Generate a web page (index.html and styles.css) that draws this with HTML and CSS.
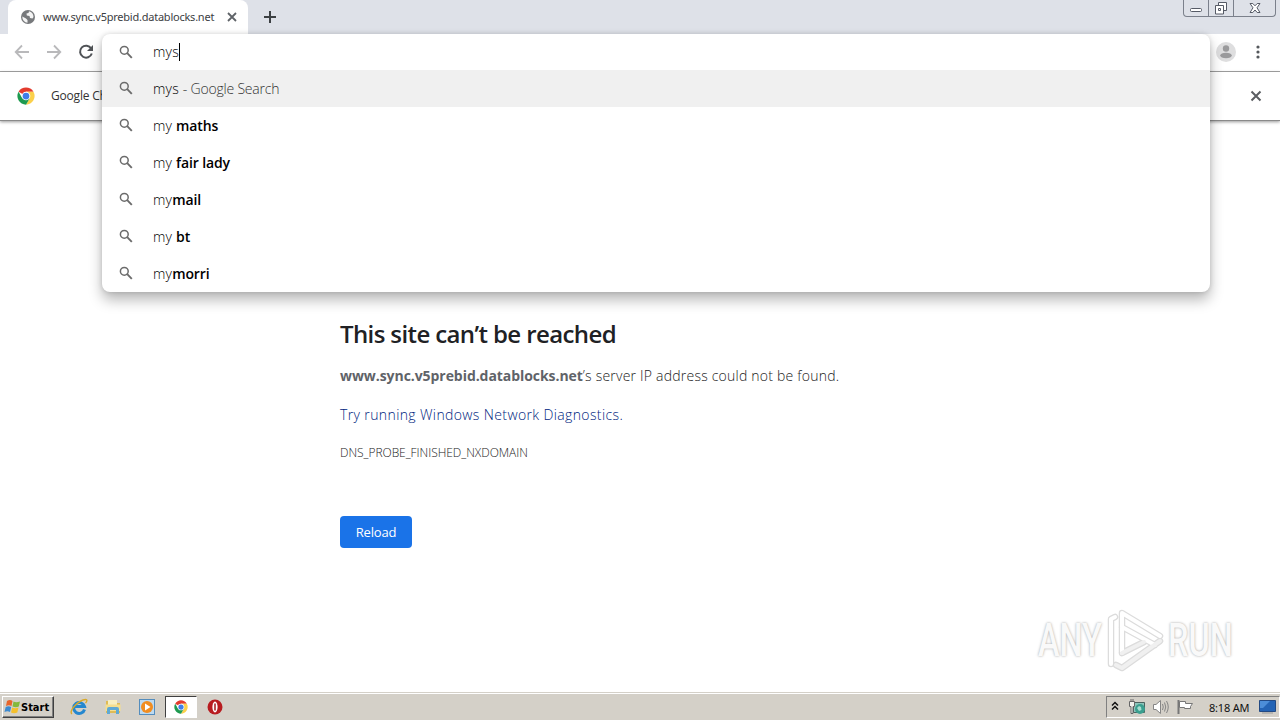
FILE: index.html
```html
<!DOCTYPE html>
<html lang="en">
<head>
    <meta charset="UTF-8">
    <meta name="viewport" content="width=device-width, initial-scale=1.0">
    <title>www.sync.v5prebid.datablocks.net</title>
    <link rel="stylesheet" href="styles.css">
</head>
<body>
    <svg class="defs" width="0" height="0">
        <symbol id="search" viewBox="0 0 14 14">
            <circle cx="5.3" cy="5.3" r="3.9" fill="none" stroke="#6b6b6b" stroke-width="1.5"/>
            <path d="M8.2 8.2L12.8 12.8" stroke="#6b6b6b" stroke-width="1.9"/>
        </symbol>
        <symbol id="chrome" viewBox="0 0 48 48">
            <path d="M24 24L4.100 12.500A23 23 0 0 1 43.900 12.500H24z" fill="#e33b2e"/>
            <path d="M24 12.500H43.900A23 23 0 0 1 24 47L34 29.700z" fill="#fbd04b"/>
            <path d="M4.100 12.500L14 29.700L34 29.700L24 47A23 23 0 0 1 4.100 12.500z" fill="#1e9a50"/>
            <circle cx="24" cy="24" r="11.500" fill="#fff"/>
            <circle cx="24" cy="24" r="9" fill="#3f7ee8"/>
        </symbol>
    </svg>

    <div class="window">
        <div class="tabstrip">
            <div class="tab">
                <svg class="globe" width="14" height="14" viewBox="0 0 14 14">
                    <circle cx="7" cy="7" r="7" fill="#77797c"/>
                    <path d="M1.300 6.500L5 8.500L6.500 10V12.800A6 6 0 0 1 1.300 6.500zM8 1.300L7.500 3L5.500 3.600L5.800 5.500L8.500 6L9 8L11.500 8.500L12.500 7A6 6 0 0 0 8 1.300z" fill="#f4f4f4"/>
                </svg>
                <span class="tab-title">www.sync.v5prebid.datablocks.net</span>
                <svg class="tab-close" width="10" height="10" viewBox="0 0 10 10">
                    <path d="M1 1L9 9M9 1L1 9" stroke="#5f6368" stroke-width="1.800"/>
                </svg>
            </div>
            <svg class="new-tab" width="12" height="12" viewBox="0 0 12 12">
                <path d="M6 0V12M0 6H12" stroke="#3c4043" stroke-width="2"/>
            </svg>
            <div class="window-buttons">
                <span><svg width="14" height="16" viewBox="0 0 14 16"><rect x="1.500" y="8.500" width="11" height="3" rx="1" fill="#fff" stroke="#565b66"/></svg></span>
                <span><svg width="14" height="16" viewBox="0 0 14 16"><path d="M4.500 2.500H12.500V10.500H4.500z" fill="#fff" stroke="#565b66"/><path d="M1.500 5.500H9.500V14H1.500z" fill="#fff" stroke="#565b66"/><path d="M4.500 8.500H6.500V10.500H4.500z" fill="none" stroke="#565b66"/></svg></span>
                <span class="close"><svg width="14" height="16" viewBox="0 0 14 16"><path d="M2 3.500H4.800L7 5.800L9.200 3.500H12L9 7.800L12 12.500H9.200L7 10L4.800 12.500H2L5 7.800z" fill="#fff" stroke="#565b66"/></svg></span>
            </div>
        </div>

        <div class="toolbar">
            <svg width="16" height="16" viewBox="0 0 16 16"><path d="M15 8H2M8 1.500L1.700 8L8 14.500" fill="none" stroke="#b9b9bb" stroke-width="1.800"/></svg>
            <svg width="16" height="16" viewBox="0 0 16 16"><path d="M1 8H14M8 1.500L14.300 8L8 14.500" fill="none" stroke="#b9b9bb" stroke-width="1.800"/></svg>
            <svg width="16" height="16" viewBox="0 0 16 16"><path d="M13.200 4.500A6 6 0 1 0 13.800 9.500" fill="none" stroke="#4f5256" stroke-width="2"/><path d="M15 1V7H9z" fill="#4f5256"/></svg>
            <div class="toolbar-right">
                <svg width="20" height="20" viewBox="0 0 20 20"><circle cx="10" cy="10" r="10" fill="#dededf"/><circle cx="10" cy="6.500" r="3.200" fill="#9a9a9c"/><ellipse cx="10" cy="13.500" rx="5.800" ry="2.800" fill="#9a9a9c"/></svg>
                <svg width="4" height="14" viewBox="0 0 4 14"><circle cx="2" cy="2" r="1.600" fill="#55585c"/><circle cx="2" cy="7" r="1.600" fill="#55585c"/><circle cx="2" cy="12" r="1.600" fill="#55585c"/></svg>
            </div>
        </div>

        <div class="infobar">
            <svg width="18" height="18"><use href="#chrome"/></svg>
            <span class="infobar-text">Google Chrome</span>
            <svg class="infobar-close" width="12" height="12" viewBox="0 0 12 12"><path d="M1.500 1.500L10.500 10.500M10.500 1.500L1.500 10.500" stroke="#5b5e62" stroke-width="2"/></svg>
        </div>

        <div class="omnibox">
            <div class="row input">
                <svg width="14" height="14"><use href="#search"/></svg>
                <span>mys</span><i class="caret"></i>
            </div>
            <div class="row selected">
                <svg width="14" height="14"><use href="#search"/></svg>
                <span>mys <em>- Google Search</em></span>
            </div>
            <div class="row"><svg width="14" height="14"><use href="#search"/></svg><span>my <b>maths</b></span></div>
            <div class="row"><svg width="14" height="14"><use href="#search"/></svg><span>my <b>fair lady</b></span></div>
            <div class="row"><svg width="14" height="14"><use href="#search"/></svg><span>my<b>mail</b></span></div>
            <div class="row"><svg width="14" height="14"><use href="#search"/></svg><span>my <b>bt</b></span></div>
            <div class="row"><svg width="14" height="14"><use href="#search"/></svg><span>my<b>morri</b></span></div>
        </div>

        <div class="page">
            <h1>This site can’t be reached</h1>
            <p class="summary"><b>www.sync.v5prebid.datablocks.net</b><span>’s server IP address could not be found.</span></p>
            <a class="diagnose">Try running Windows Network Diagnostics.</a>
            <div class="error-code">DNS_PROBE_FINISHED_NXDOMAIN</div>
            <button class="reload">Reload</button>
        </div>

        <div class="watermark">
            <span class="any">ANY</span>
            <svg width="60" height="66" viewBox="0 0 60 66">
                <g fill="none" stroke-linejoin="round" stroke-linecap="round">
                    <path d="M6 57V12L10 10M17 46V6L55 29M17 20L50 38M55 34L17 61L11 58M17 46L39 35" stroke="#dcdcdc" stroke-width="6.500"/>
                    <path d="M6 57V12L10 10M17 46V6L55 29M17 20L50 38" stroke="#fff" stroke-width="4"/>
                    <path d="M55 34L17 61L11 58M17 46L39 35" stroke="#f0f0f0" stroke-width="4"/>
                </g>
            </svg>
            <span class="run">RUN</span>
        </div>

        <div class="taskbar">
            <div class="start">
                <svg width="17" height="16" viewBox="0 0 17 16">
                    <path d="M3 2Q6 0 8.500 2L7.500 7Q5 5.500 2 7z" fill="#e8652b"/>
                    <path d="M9.500 2.500Q12 4 16 2.500L14.800 7.500Q12 9 8.500 7.500z" fill="#83b93c"/>
                    <path d="M1.700 8Q4.500 6.500 7.200 8L6 13Q3.500 11.500 .5 13z" fill="#3c8ad0"/>
                    <path d="M8.200 8.500Q11 10 14.500 8.500L13.300 13.500Q10 15 7 13.500z" fill="#f5c02c"/>
                </svg>
                <span>Start</span>
            </div>
            <div class="tasks">
                <div class="task">
                    <svg width="18" height="18" viewBox="0 0 18 18"><path d="M14.500 11.500A5.500 5.500 0 1 1 14.500 8.500H5" fill="none" stroke="#2487cf" stroke-width="3"/><path d="M2 16C-2 13 9 2 15.500 1.500C18 1.500 16.500 4 15.500 5" fill="none" stroke="#d9a928" stroke-width="1.400"/></svg>
                </div>
                <div class="task">
                    <svg width="18" height="18" viewBox="0 0 18 18"><path d="M2 3H7L8 5H16V15H2z" fill="#dfbb55"/><path d="M4 2H13V7H4z" fill="#f8efc0"/><path d="M1.500 6.500H16.500V13H1.500z" fill="#f5df8f"/><path d="M3 16V11Q3 9 5 9H13Q15 9 15 11V16H12V12H6V16z" fill="#5fa9d4"/></svg>
                </div>
                <div class="task">
                    <svg width="18" height="18" viewBox="0 0 18 18"><rect x="1.500" y="1.500" width="15" height="15" fill="#bddaf0" stroke="#548dbd"/><circle cx="9" cy="9" r="6" fill="#f18d20"/><path d="M7 5.500L12.500 9L7 12.500z" fill="#fff"/></svg>
                </div>
                <div class="task active"><svg width="14" height="14"><use href="#chrome"/></svg></div>
                <div class="task">
                    <svg width="16" height="16" viewBox="0 0 16 16"><circle cx="8" cy="8" r="7.500" fill="#b81c20"/><ellipse cx="8" cy="8" rx="2.600" ry="5.400" fill="#fff"/><path d="M8 4.500V11.500" stroke="#a3181c" stroke-width="1.500"/></svg>
                </div>
            </div>
            <div class="tray">
                <svg class="chevron" width="8" height="10" viewBox="0 0 8 10"><path d="M1 4.500L4 1.500L7 4.500M1 8.500L4 5.500L7 8.500" fill="none" stroke="#111" stroke-width="1.500"/></svg>
                <svg width="17" height="16" viewBox="0 0 17 16"><path d="M4.500 3.500H15.500V13.500H4.500z" fill="#8cc4ba" stroke="#4b625f"/><path d="M.5 2.500H5.500V7.500H4V14.500H2V7.500H.5zM2 0V2M4 0V2" fill="#f1f1ed" stroke="#666"/><circle cx="11" cy="10" r="5" fill="#3b9f8f"/><path d="M8 9L10 7L12 8L12.500 11L10 12z" fill="#a8ded0"/></svg>
                <svg width="18" height="16" viewBox="0 0 18 16"><path d="M1.500 5.500H4L8.500 1.500V14.500L4 10.500H1.500z" fill="#fff" stroke="#858585"/><path d="M10.500 5Q12 8 10.500 11M12.500 3.500Q15 8 12.500 12.500M14.500 2Q18 8 14.500 14" fill="none" stroke="#858585"/></svg>
                <svg width="18" height="16" viewBox="0 0 18 16"><path d="M2.500 1V15" stroke="#777" stroke-width="2"/><path d="M3.500 2.500H9.500V4.500H16.500L14.500 7.500V9.500H8.500V8.500H3.500z" fill="#fff" stroke="#777"/></svg>
                <span class="clock">8:18 AM</span>
                <svg width="17" height="14" viewBox="0 0 17 14"><path d="M.5 .5H16.500V11.500H.5z" fill="#2464b5" stroke="#234a83"/><path d="M1 1H11L4 8H1z" fill="#4c8ed8"/><path d="M3 13H14" stroke="#999"/></svg>
            </div>
        </div>
    </div>
</body>
</html>
```

FILE: styles.css
```css
* {
    box-sizing: border-box;
}

body {
    margin: 0;
    font-family: "Open Sans", "Noto Sans", sans-serif;
    background: #fff;
}

svg {
    display: block;
    flex: none;
}

.defs {
    position: absolute;
}

.window {
    position: relative;
    display: flex;
    flex-direction: column;
    width: 1280px;
    height: 720px;
    overflow: hidden;
}

.tabstrip {
    display: flex;
    height: 34px;
    background: #dee1e8;
}

.tab {
    display: flex;
    align-items: center;
    width: 240px;
    margin-left: 8px;
    padding-left: 13px;
    background: #fff;
    border-radius: 8px 8px 0 0;
}

.tab-title {
    width: 171px;
    margin: -2px 0 0 8px;
    font-family: "Noto Sans", sans-serif;
    font-size: 11px;
    letter-spacing: -0.23px;
    white-space: nowrap;
    color: #3c4043;
}

.tab-close {
    margin-left: 13px;
}

.new-tab {
    margin: 11px 0 0 16px;
}

.window-buttons {
    display: flex;
    height: 17px;
    margin-left: auto;
    margin-right: 4px;
    border: 1px solid #7b808b;
    border-top: 0;
    border-radius: 0 0 4px 4px;
}

.window-buttons span {
    display: flex;
    justify-content: center;
    width: 25px;
    border-right: 1px solid #7b808b;
}

.window-buttons .close {
    width: 41px;
    border: 0;
}

.toolbar {
    display: flex;
    align-items: center;
    gap: 16px;
    height: 38px;
    padding: 0 20px 2px 14px;
    border-bottom: 1px solid #a6a6a6;
}

.toolbar-right {
    display: flex;
    align-items: center;
    gap: 20px;
    margin-left: auto;
}

.infobar {
    display: flex;
    align-items: center;
    height: 49px;
    padding: 0 18px 0 17px;
    border-bottom: 1px solid #8a8a8a;
    box-shadow: 0 1px 3px rgba(0, 0, 0, 0.4);
}

.infobar-text {
    margin: -2px 0 0 16px;
    font-size: 12px;
    letter-spacing: -0.2px;
    color: #333;
}

.infobar-close {
    margin-left: auto;
}

.omnibox {
    position: absolute;
    top: 34px;
    left: 102px;
    width: 1108px;
    background: #fff;
    border-radius: 8px;
    box-shadow: 0 8px 14px rgba(0, 0, 0, 0.28), 0 0 5px rgba(0, 0, 0, 0.14);
}

.row {
    display: flex;
    align-items: center;
    height: 37px;
    padding-left: 17px;
    font-size: 14px;
    color: #000;
}

.row svg {
    margin-top: -2px;
}

.row span {
    margin-left: 20px;
    white-space: pre;
    font-weight: 300;
    letter-spacing: 0.2px;
}

.row b {
    font-weight: 600;
    letter-spacing: -0.12px;
}

.row em {
    font-style: normal;
    letter-spacing: -0.2px;
    color: #333;
}

.input {
    height: 36px;
}

.input svg {
    margin-top: 0;
}

.input span {
    margin-top: -2px;
}

.selected {
    background: #f0f0f0;
}

.caret {
    width: 1px;
    height: 18px;
    background: #000;
}

.page {
    flex: 1;
    padding: 194px 0 0 340px;
    font-weight: 300;
    color: #222;
}

.page h1 {
    margin: 0;
    font-size: 24px;
    line-height: 38px;
    font-weight: 600;
    letter-spacing: -0.61px;
    white-space: nowrap;
    color: #202124;
}

.summary {
    margin: 13px 0 0;
    font-size: 14px;
    line-height: 20px;
    white-space: nowrap;
}

.summary b {
    font-weight: 700;
    color: #5f6368;
    letter-spacing: -0.06px;
}

.summary span {
    letter-spacing: 0.22px;
}

.diagnose {
    display: block;
    margin-top: 19px;
    font-size: 14px;
    line-height: 20px;
    letter-spacing: 0.38px;
    color: #00257e;
}

.error-code {
    margin-top: 18px;
    font-size: 12px;
    line-height: 20px;
    letter-spacing: -0.04px;
}

.reload {
    display: block;
    width: 72px;
    height: 32px;
    margin-top: 53px;
    padding: 0;
    font-family: inherit;
    font-size: 13px;
    letter-spacing: -0.15px;
    color: #fff;
    background: #1a73e8;
    border: 0;
    border-radius: 4px;
}

.watermark {
    position: absolute;
    top: 607px;
    left: 1038px;
    display: flex;
    align-items: center;
    width: 200px;
    height: 66px;
}

.watermark span {
    flex: none;
    font-family: Roboto, sans-serif;
    font-size: 47px;
    font-weight: 500;
    line-height: 66px;
    color: #f9f9f9;
    text-shadow: 0 0 3px #a0a0a0;
    transform: scaleX(0.69);
    transform-origin: left;
}

.watermark .any {
    width: 67px;
}

.watermark .run {
    width: 66px;
    margin-left: 3px;
}

.taskbar {
    display: flex;
    align-items: center;
    height: 28px;
    padding: 1px 0 0 2px;
    background: #d4d0c8;
    border-top: 1px solid #d4d0c8;
    box-shadow: inset 0 1px #fff;
}

.start {
    display: flex;
    align-items: center;
    width: 52px;
    height: 22px;
    padding-left: 1px;
    font: bold 11px "DejaVu Sans Condensed", "DejaVu Sans", sans-serif;
    color: #000;
    border: 1px solid;
    border-color: #fff #404040 #404040 #fff;
    box-shadow: inset -1px -1px #808080;
}

.tasks {
    display: flex;
    gap: 2px;
    margin-left: 9px;
}

.task {
    display: flex;
    align-items: center;
    justify-content: center;
    width: 32px;
    height: 22px;
}

.active {
    background: #fff;
    border: 1px solid;
    border-color: #404040 #fff #fff #404040;
}

.tray {
    display: flex;
    align-items: center;
    width: 174px;
    height: 22px;
    margin-left: auto;
    padding-left: 4px;
    border: 1px solid;
    border-color: #808080 #fff #fff #808080;
    gap: 6px;
}

.chevron {
    margin: -2px 4px 0 0;
}

.clock {
    width: 44px;
    margin-left: 9px;
    font-family: "Noto Sans", sans-serif;
    font-size: 11px;
    letter-spacing: -0.2px;
    white-space: nowrap;
    color: #111;
}
```
